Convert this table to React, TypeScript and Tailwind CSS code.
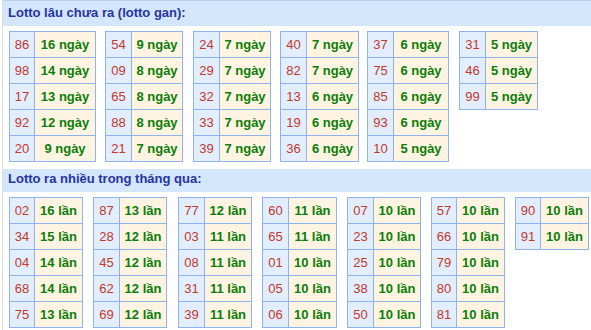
import React from "react";

type Tbl = { w: string; n: string; ml: string; rows: [string, string][] };

const sec1: Tbl[] = [
  { w: "w-[87px]", n: "w-[25px]", ml: "ml-[6px]", rows: [["86", "16"], ["98", "14"], ["17", "13"], ["92", "12"], ["20", "9"]] },
  { w: "w-[78px]", n: "w-[26px]", ml: "ml-[9px]", rows: [["54", "9"], ["09", "8"], ["65", "8"], ["88", "8"], ["21", "7"]] },
  { w: "w-[78px]", n: "w-[26px]", ml: "ml-[10px]", rows: [["24", "7"], ["29", "7"], ["32", "7"], ["33", "7"], ["39", "7"]] },
  { w: "w-[79px]", n: "w-[26px]", ml: "ml-[9px]", rows: [["40", "7"], ["82", "7"], ["13", "6"], ["19", "6"], ["36", "6"]] },
  { w: "w-[82px]", n: "w-[26px]", ml: "ml-[8px]", rows: [["37", "6"], ["75", "6"], ["85", "6"], ["93", "6"], ["10", "5"]] },
  { w: "w-[79px]", n: "w-[26px]", ml: "ml-[10px]", rows: [["31", "5"], ["46", "5"], ["99", "5"]] },
];

const sec2: Tbl[] = [
  { w: "w-[74px]", n: "w-[25px]", ml: "ml-[6px]", rows: [["02", "16"], ["34", "15"], ["04", "14"], ["68", "14"], ["75", "13"]] },
  { w: "w-[74px]", n: "w-[26px]", ml: "ml-[10px]", rows: [["87", "13"], ["28", "12"], ["45", "12"], ["62", "12"], ["69", "12"]] },
  { w: "w-[74px]", n: "w-[26px]", ml: "ml-[11px]", rows: [["77", "12"], ["03", "11"], ["08", "11"], ["31", "11"], ["39", "11"]] },
  { w: "w-[75px]", n: "w-[26px]", ml: "ml-[10px]", rows: [["60", "11"], ["65", "11"], ["01", "10"], ["05", "10"], ["06", "10"]] },
  { w: "w-[74px]", n: "w-[26px]", ml: "ml-[10px]", rows: [["07", "10"], ["23", "10"], ["25", "10"], ["38", "10"], ["50", "10"]] },
  { w: "w-[74px]", n: "w-[25px]", ml: "ml-[10px]", rows: [["57", "10"], ["66", "10"], ["79", "10"], ["80", "10"], ["81", "10"]] },
  { w: "w-[74px]", n: "w-[25px]", ml: "ml-[10px]", rows: [["90", "10"], ["91", "10"]] },
];

function Table({ t, unit }: { t: Tbl; unit: string }) {
  return (
    <div className={`${t.w} ${t.ml} shrink-0 border-l border-t border-[#8fb3ef] self-start`}>
      {t.rows.map(([num, cnt], i) => (
        <div key={i} className="flex h-[26px]">
          <div className={`${t.n} shrink-0 bg-[#e2edfd] border-r border-b border-[#8fb3ef] text-center text-[13px] leading-[25px] text-[#c0392b]`}>
            {num}
          </div>
          <div className="flex-1 bg-[#fff4e1] border-r border-b border-[#8fb3ef] text-center text-[13px] leading-[25px] font-bold text-[#0b7d0b] whitespace-nowrap">
            {cnt} {unit}
          </div>
        </div>
      ))}
    </div>
  );
}

export default function App() {
  return (
    <div
      className="w-[591px] h-[330px] overflow-hidden bg-white"
      style={{ fontFamily: '"Liberation Sans", Arial, sans-serif' }}
    >
      <div className="ml-[2px] h-full border-l border-[#dcdcdc]">
        <div className="h-[26px] bg-[#d4e6fb] border-t border-[#bcd1ec] pl-[5px] pt-[4px] text-[13px] leading-[15px] font-bold text-[#26359e] whitespace-nowrap">
          Lotto lâu chưa ra (lotto gan):
        </div>
        <div className="flex mt-[5px]">
          {sec1.map((t, i) => (
            <Table key={i} t={t} unit="ngày" />
          ))}
        </div>
        <div className="mt-[7px] h-[23px] bg-[#d4e6fb] pl-[5px] pt-[2px] text-[13px] leading-[15px] font-bold text-[#26359e] whitespace-nowrap">
          Lotto ra nhiều trong tháng qua:
        </div>
        <div className="flex mt-[5px]">
          {sec2.map((t, i) => (
            <Table key={i} t={t} unit="lần" />
          ))}
        </div>
      </div>
    </div>
  );
}
